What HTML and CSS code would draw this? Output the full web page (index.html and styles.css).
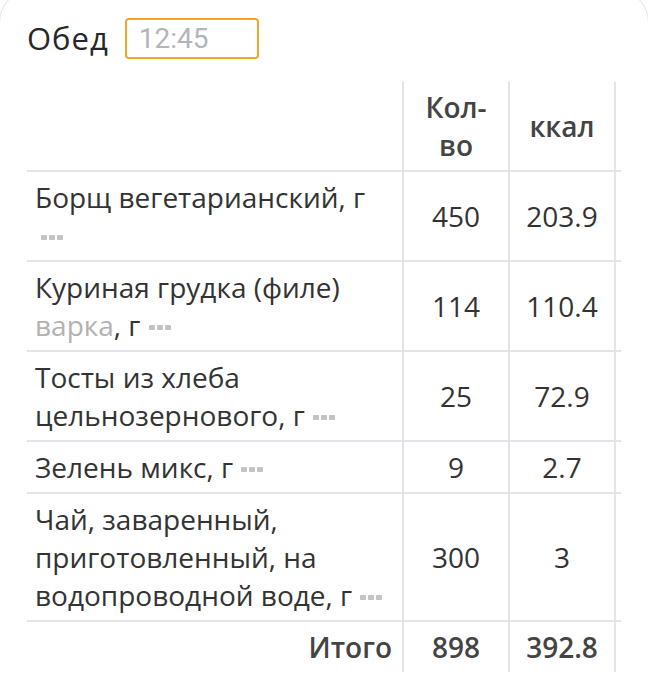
FILE: index.html
```html
<!DOCTYPE html>
<html lang="ru">
<head>
<meta charset="utf-8">
<link rel="stylesheet" href="styles.css">
</head>
<body>
<div class="card">
  <div class="meal-head">
    <span class="meal-title">Обед</span>
    <div class="time-box">12:45</div>
  </div>
  <table class="meal">
    <colgroup>
      <col class="c-name"><col class="c-num"><col class="c-num"><col class="c-edge">
    </colgroup>
    <thead>
      <tr><th></th><th class="num">Кол-<br>во</th><th class="num">ккал</th><th class="edge"></th></tr>
    </thead>
    <tbody>
      <tr>
        <td class="name">Борщ вегетарианский, г<br><span class="more first"><i></i><i></i><i></i></span></td>
        <td class="num">450</td><td class="num">203.9</td><td class="edge"></td>
      </tr>
      <tr>
        <td class="name">Куриная грудка (филе) <span class="muted">варка</span>, г <span class="more"><i></i><i></i><i></i></span></td>
        <td class="num">114</td><td class="num">110.4</td><td class="edge"></td>
      </tr>
      <tr>
        <td class="name">Тосты из хлеба цельнозернового, г <span class="more"><i></i><i></i><i></i></span></td>
        <td class="num">25</td><td class="num">72.9</td><td class="edge"></td>
      </tr>
      <tr>
        <td class="name">Зелень микс, г <span class="more"><i></i><i></i><i></i></span></td>
        <td class="num">9</td><td class="num">2.7</td><td class="edge"></td>
      </tr>
      <tr>
        <td class="name">Чай, заваренный, приготовленный, на водопроводной воде, г <span class="more"><i></i><i></i><i></i></span></td>
        <td class="num">300</td><td class="num">3</td><td class="edge"></td>
      </tr>
    </tbody>
    <tfoot>
      <tr><td class="total-label">Итого</td><td class="num">898</td><td class="num">392.8</td><td class="edge"></td></tr>
    </tfoot>
  </table>
</div>
</body>
</html>
```
FILE: styles.css
```css
html, body {
  margin: 0;
  padding: 0;
  background: #ffffff;
}
body {
  font-family: "Open Sans", "Noto Sans", sans-serif;
  color: #333333;
  overflow: hidden;
}
.card {
  margin: -10px -1px 0 -1px;
  border: 1px solid #e3e3e3;
  border-radius: 32px;
  padding: 27px 27px 40px 27px;
  background: #ffffff;
}
.meal-head {
  display: flex;
  align-items: center;
  gap: 16px;
  height: 41px;
}
.meal-title {
  font-size: 31px;
  letter-spacing: 1px;
  color: #262626;
  line-height: 1;
}
.time-box {
  box-sizing: border-box;
  width: 134px;
  height: 41px;
  border: 2px solid #f2a52a;
  border-radius: 4px;
  padding: 0 12px;
  display: flex;
  align-items: center;
  font-family: Roboto, "Noto Sans", sans-serif;
  font-size: 28px;
  color: #b3b5ba;
}
.meal {
  margin-top: 23px;
  width: 594px;
  border-collapse: collapse;
  table-layout: fixed;
  font-size: 28px;
  line-height: 38px;
}
.c-name { width: 376px; }
.c-num { width: 106px; }
.c-edge { width: 6px; }
.meal th, .meal td {
  padding: 6px 8px;
    vertical-align: middle;
}
.meal th {
  font-weight: 560;
  color: #444444;
}
.meal th.num, .meal td.num, .meal td.edge, .meal th.edge {
  border-left: 2px solid #e3e4e8;
  text-align: center;
}
.meal td.edge, .meal th.edge { padding: 0; }
.meal tbody tr, .meal tfoot tr {
  border-top: 2px solid #e3e4e8;
}
.meal td.name {
  text-align: left;
}
.muted { color: #b2b2b2; }
.more {
  display: inline-flex;
  gap: 2px;
  vertical-align: 6px;
  margin-left: 1px;
}
.more.first { margin-left: 6px; }
.more i {
  display: block;
  width: 6px;
  height: 5px;
  border-radius: 1px;
  background: #c3c3c6;
}
.meal tfoot td {
  font-weight: 560;
  color: #444444;
}
.meal td.total-label {
  text-align: right;
  padding-right: 10px;
}
```
